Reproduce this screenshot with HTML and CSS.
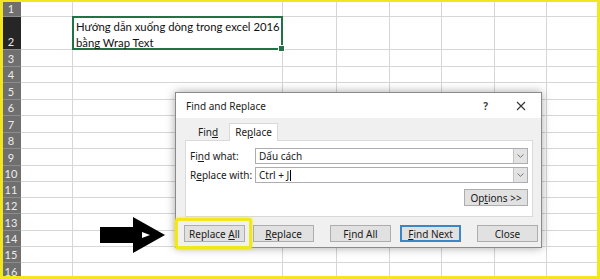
FILE: index.html
```html
<!DOCTYPE html>
<html lang="vi">
<head>
<meta charset="UTF-8" />
<title>Find and Replace</title>
<link rel="stylesheet" href="styles.css">
</head>
<body>

<div class="frame">
  <div class="sheet">
    <div class="hd">1</div><span></span><span></span><span></span><span></span><span></span><span></span><span></span><span></span>
    <div class="hd sel">2</div><span></span><span class="active">Hướng dẫn xuống dòng trong excel 2016<br>bằng Wrap Text</span><span></span><span></span><span></span><span></span><span></span><span></span>
    <div class="hd">3</div><span></span><span></span><span></span><span></span><span></span><span></span><span></span><span></span>
    <div class="hd">4</div><span></span><span></span><span></span><span></span><span></span><span></span><span></span><span></span>
    <div class="hd">5</div><span></span><span></span><span></span><span></span><span></span><span></span><span></span><span></span>
    <div class="hd">6</div><span></span><span></span><span></span><span></span><span></span><span></span><span></span><span></span>
    <div class="hd">7</div><span></span><span></span><span></span><span></span><span></span><span></span><span></span><span></span>
    <div class="hd">8</div><span></span><span></span><span></span><span></span><span></span><span></span><span></span><span></span>
    <div class="hd">9</div><span></span><span></span><span></span><span></span><span></span><span></span><span></span><span></span>
    <div class="hd">10</div><span></span><span></span><span></span><span></span><span></span><span></span><span></span><span></span>
    <div class="hd">11</div><span></span><span></span><span></span><span></span><span></span><span></span><span></span><span></span>
    <div class="hd">12</div><span></span><span></span><span></span><span></span><span></span><span></span><span></span><span></span>
    <div class="hd">13</div><span></span><span></span><span></span><span></span><span></span><span></span><span></span><span></span>
    <div class="hd">14</div><span></span><span></span><span></span><span></span><span></span><span></span><span></span><span></span>
    <div class="hd">15</div><span></span><span></span><span></span><span></span><span></span><span></span><span></span><span></span>
    <div class="hd">16</div><span></span><span></span><span></span><span></span><span></span><span></span><span></span><span></span>
  </div>

  <!-- mũi tên chỉ vào nút Replace All -->
  <svg class="arrow" width="66" height="37" viewBox="0 0 66 37">
    <polygon points="0,10 33,10 33,0 65,18 33,36 33,26 0,26" fill="#000" />
    <polygon points="42,15 50,18 42,21" fill="#fff" />
  </svg>

  <div class="dialog">
    <div class="dlg-title">
      <span class="dlg-name">Find and Replace</span>
      <span class="dlg-help">?</span>
      <svg class="dlg-close" width="10" height="10" viewBox="0 0 10 10">
        <path d="M1 1 L9 9 M9 1 L1 9" stroke="#333" stroke-width="1.1" fill="none" />
      </svg>
    </div>

    <div class="dlg-body">
      <div class="tabs">
        <div class="tab">Fin<u>d</u></div>
        <div class="tab current">Re<u>p</u>lace</div>
      </div>
      <div class="panel">
        <div class="field">
          <label>Fi<u>n</u>d what:</label>
          <div class="combo"><span class="combo-text">Dấu cách</span><span class="drop"><svg width="7" height="4" viewBox="0 0 7 4"><path d="M0.5 0.5 L3.5 3.3 L6.5 0.5" stroke="#777" fill="none" /></svg></span></div>
        </div>
        <div class="field">
          <label>R<u>e</u>place with:</label>
          <div class="combo"><span class="combo-text">Ctrl + J<i class="caret"></i></span><span class="drop"><svg width="7" height="4" viewBox="0 0 7 4"><path d="M0.5 0.5 L3.5 3.3 L6.5 0.5" stroke="#777" fill="none" /></svg></span></div>
        </div>
        <div class="options-row">
          <button class="btn options">Op<u>t</u>ions &gt;&gt;</button>
        </div>
      </div>
    </div>

    <div class="dlg-buttons">
      <div class="highlight"><button class="btn">Replace <u>A</u>ll</button></div>
      <button class="btn"><u>R</u>eplace</button>
      <button class="btn gap">F<u>i</u>nd All</button>
      <button class="btn default"><u>F</u>ind Next</button>
      <button class="btn gap">Close</button>
    </div>
  </div>
</div>

</body>
</html>
```

FILE: styles.css
```css
* {
  box-sizing: border-box;
}
body, html {
  margin: 0; padding: 0;
  width: 600px;
  height: 279px;
  overflow: hidden;
  background: #fff;
}
.frame {
  position: relative;
  width: 600px;
  height: 279px;
  border: solid #f2e61c;
  border-width: 2px 3px 3px 3px;
  overflow: hidden;
  font-family: Lato, "Open Sans", sans-serif;
}

/* lưới bảng tính */
.sheet {
  display: grid;
  grid-template-columns: 18px 52px 210px 54px 53px 52px 53px 52px 52px;
  grid-template-rows: 15px 33px 17px 16px 17px 16px 17px 16px 17px 16px 16px 16px 17px 16px 16px 17px;
}
.sheet span {
  border-right: 1px solid #d6d6d6;
  border-bottom: 1px solid #d6d6d6;
}
.hd {
  background: #6f6f6f;
  color: #ececec;
  font-size: 11px;
  line-height: 1;
  display: flex;
  align-items: flex-end;
  justify-content: center;
  padding: 0 2px 2px 0;
  border-bottom: 1px solid #8c8c8c;
}
.hd.sel {
  background: #262626;
}
.sheet .active {
  border: 2px solid #217346;
  margin: -1px 0 0 -1px;
  padding: 1px 0 0 2px;
  font-size: 11.3px;
  line-height: 16px;
  white-space: nowrap;
  color: #111;
  position: relative;
}
.sheet .active::after {
  content: "";
  position: absolute;
  right: -4px;
  bottom: -4px;
  width: 5px;
  height: 5px;
  background: #217346;
  border: 1px solid #fff;
}

.arrow {
  position: absolute;
  left: 97px;
  top: 215px;
}

/* hộp thoại */
.dialog {
  position: absolute;
  left: 172px;
  top: 90px;
  width: 367px;
  height: 156px;
  border: 1px solid #8a8a8a;
  background: #f0f0f0;
  box-shadow: 0 0 9px rgba(0,0,0,0.35);
  font-family: "Noto Sans", "Open Sans", sans-serif;
  font-size: 10px;
  color: #1a1a1a;
}
.dlg-title {
  height: 25px;
  background: #fff;
  display: flex;
  align-items: center;
  padding: 0 15px 0 10px;
  font-size: 10px;
}
.dlg-name {
  flex: 1;
}
.dlg-help {
  font-weight: bold;
  font-size: 10px;
  color: #444;
  margin-right: 28px;
}
.dlg-body {
  padding: 5px 8px 0 9px;
}
.tabs {
  display: flex;
  height: 17px;
  padding-left: 2px;
}
.tab {
  width: 42px;
  text-align: center;
  line-height: 18px;
}
.tab.current {
  width: 49px;
  background: #fff;
  border: 1px solid #d9d9d9;
  border-bottom: none;
  height: 18px;
  line-height: 17px;
  position: relative;
  z-index: 1;
}
.panel {
  height: 77px;
  background: #fff;
  border: 1px solid #d9d9d9;
  padding: 7px 4px 0 4px;
}
.field {
  display: flex;
  align-items: center;
  height: 16px;
  margin-bottom: 3px;
}
.field label {
  width: 65px;
}
.combo {
  flex: 1;
  height: 16px;
  border: 1px solid #abadb3;
  display: flex;
  align-items: center;
}
.combo-text {
  flex: 1;
  padding-left: 3px;
  display: flex;
  align-items: center;
}
.caret {
  display: inline-block;
  width: 1px;
  height: 11px;
  background: #000;
  margin-left: 1px;
}
.drop {
  width: 14px;
  height: 14px;
  background: #e3e3e3;
  border-left: 1px solid #c4c4c4;
  display: flex;
  align-items: center;
  justify-content: center;
}
.options-row {
  display: flex;
  justify-content: flex-end;
  margin-top: 6px;
}
.btn {
  font-family: "Noto Sans", "Open Sans", sans-serif;
  font-size: 10px;
  color: #1a1a1a;
  width: 61px;
  height: 17px;
  padding: 0;
  background: #e1e1e1;
  border: 1px solid #adadad;
  border-radius: 0;
}
.btn.options {
  width: 64px;
}
.dlg-buttons {
  display: flex;
  align-items: center;
  height: 31px;
  margin: 1px 0 0 -1px;
}
.highlight {
  border: 3px solid #f2e61c;
  border-radius: 3px;
  padding: 4px 4px 4px 6px;
  box-shadow: 0 0 3px #f2e61c;
  margin-right: 1px;
}
.btn.gap {
  margin-left: 16px;
}
.btn.default {
  margin-left: 9px;
  border: 2px solid #3a87c8;
}
```
